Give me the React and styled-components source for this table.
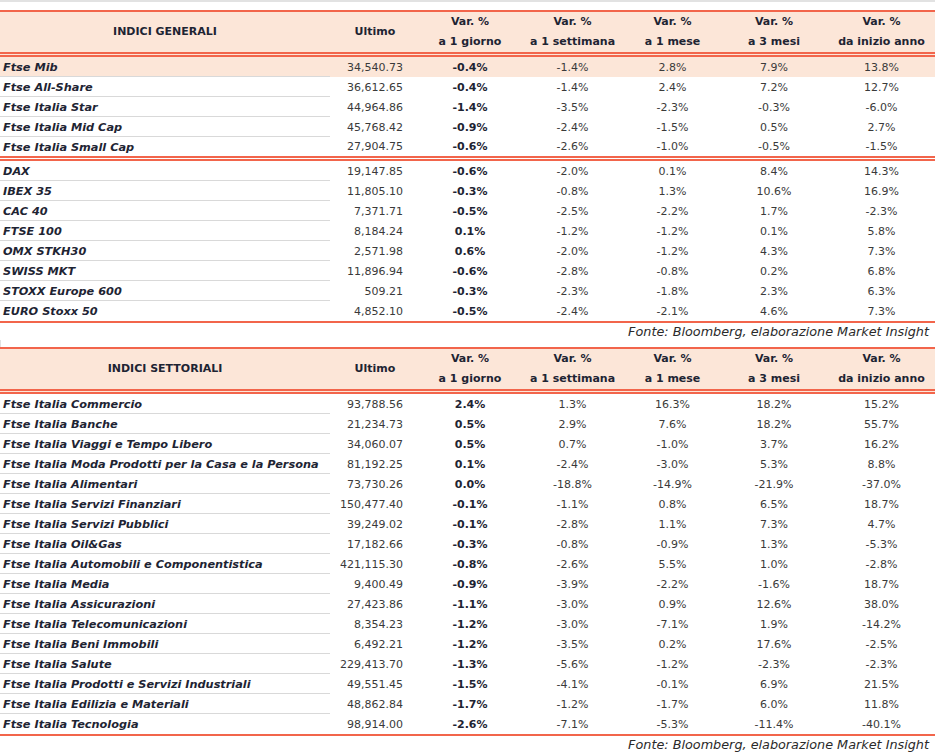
import React from 'react';
import styled, { createGlobalStyle } from 'styled-components';

const GlobalStyle = createGlobalStyle`
  body {
    margin: 0;
    background: #fff;
    font-family: "DejaVu Sans", "Liberation Sans", sans-serif;
    color: #1e2433;
  }
`;

const ORANGE = '#f2654b';
const PEACH = '#fce6d8';

const Page = styled.div`
  width: 935px;
  border-top: 2px solid #e2e2e2;
  padding-top: 8px;
`;

const Table = styled.table`
  width: 935px;
  table-layout: fixed;
  border-collapse: separate;
  border-spacing: 0;
  border-top: 2px solid ${ORANGE};
  border-bottom: 2px solid ${ORANGE};
`;

const HeadRow = styled.tr`
  height: 45px;
`;

const HeadCell = styled.th`
  background: ${PEACH};
  padding: 0;
  font-size: 11px;
  font-weight: 700;
  line-height: 20px;
  text-align: center;
  color: #1e2433;
  border-bottom: 5px double ${ORANGE};
  vertical-align: middle;
  white-space: nowrap;
`;

const Row = styled.tr`
  height: ${p => (p.$split ? '24px' : '20px')};
  background: ${p => (p.$highlight ? PEACH : 'transparent')};
`;

const NameCell = styled.td`
  padding: 1px 0 0 3px;
  font-size: 11.3px;
  font-weight: 700;
  font-style: italic;
  white-space: nowrap;
  overflow: hidden;
  color: #1e2433;
  border-bottom: ${p => (p.$split ? `5px double ${ORANGE}` : p.$last ? 'none' : '1px solid #d9d9d9')};
`;

const ValueCell = styled.td`
  padding: 0 ${p => (p.$right ? '17px' : '0')} 0 0;
  font-size: 11px;
  font-weight: ${p => (p.$bold ? 700 : 400)};
  text-align: ${p => (p.$right ? 'right' : 'center')};
  color: ${p => (p.$bold ? '#1e2433' : '#3a3a3a')};
  border-bottom: ${p => (p.$split ? `5px double ${ORANGE}` : 'none')};
`;

const Source = styled.div`
  width: 935px;
  box-sizing: border-box;
  padding-right: 6px;
  height: 17px;
  line-height: 17px;
  text-align: right;
  font-size: 12.8px;
  font-style: italic;
  color: #2a2a2a;
`;

const Gap = styled.div`
  height: 7px;
  border-left: 1px solid #e2e2e2;
`;

const widths = [330, 90, 100, 105, 95, 108, 107];

const generali = [
  ['Ftse Mib', '34,540.73', '-0.4%', '-1.4%', '2.8%', '7.9%', '13.8%'],
  ['Ftse All-Share', '36,612.65', '-0.4%', '-1.4%', '2.4%', '7.2%', '12.7%'],
  ['Ftse Italia Star', '44,964.86', '-1.4%', '-3.5%', '-2.3%', '-0.3%', '-6.0%'],
  ['Ftse Italia Mid Cap', '45,768.42', '-0.9%', '-2.4%', '-1.5%', '0.5%', '2.7%'],
  ['Ftse Italia Small Cap', '27,904.75', '-0.6%', '-2.6%', '-1.0%', '-0.5%', '-1.5%'],
  ['DAX', '19,147.85', '-0.6%', '-2.0%', '0.1%', '8.4%', '14.3%'],
  ['IBEX 35', '11,805.10', '-0.3%', '-0.8%', '1.3%', '10.6%', '16.9%'],
  ['CAC 40', '7,371.71', '-0.5%', '-2.5%', '-2.2%', '1.7%', '-2.3%'],
  ['FTSE 100', '8,184.24', '0.1%', '-1.2%', '-1.2%', '0.1%', '5.8%'],
  ['OMX STKH30', '2,571.98', '0.6%', '-2.0%', '-1.2%', '4.3%', '7.3%'],
  ['SWISS MKT', '11,896.94', '-0.6%', '-2.8%', '-0.8%', '0.2%', '6.8%'],
  ['STOXX Europe 600', '509.21', '-0.3%', '-2.3%', '-1.8%', '2.3%', '6.3%'],
  ['EURO Stoxx 50', '4,852.10', '-0.5%', '-2.4%', '-2.1%', '4.6%', '7.3%'],
];

const settoriali = [
  ['Ftse Italia Commercio', '93,788.56', '2.4%', '1.3%', '16.3%', '18.2%', '15.2%'],
  ['Ftse Italia Banche', '21,234.73', '0.5%', '2.9%', '7.6%', '18.2%', '55.7%'],
  ['Ftse Italia Viaggi e Tempo Libero', '34,060.07', '0.5%', '0.7%', '-1.0%', '3.7%', '16.2%'],
  ['Ftse Italia Moda Prodotti per la Casa e la Persona', '81,192.25', '0.1%', '-2.4%', '-3.0%', '5.3%', '8.8%'],
  ['Ftse Italia Alimentari', '73,730.26', '0.0%', '-18.8%', '-14.9%', '-21.9%', '-37.0%'],
  ['Ftse Italia Servizi Finanziari', '150,477.40', '-0.1%', '-1.1%', '0.8%', '6.5%', '18.7%'],
  ['Ftse Italia Servizi Pubblici', '39,249.02', '-0.1%', '-2.8%', '1.1%', '7.3%', '4.7%'],
  ['Ftse Italia Oil&Gas', '17,182.66', '-0.3%', '-0.8%', '-0.9%', '1.3%', '-5.3%'],
  ['Ftse Italia Automobili e Componentistica', '421,115.30', '-0.8%', '-2.6%', '5.5%', '1.0%', '-2.8%'],
  ['Ftse Italia Media', '9,400.49', '-0.9%', '-3.9%', '-2.2%', '-1.6%', '18.7%'],
  ['Ftse Italia Assicurazioni', '27,423.86', '-1.1%', '-3.0%', '0.9%', '12.6%', '38.0%'],
  ['Ftse Italia Telecomunicazioni', '8,354.23', '-1.2%', '-3.0%', '-7.1%', '1.9%', '-14.2%'],
  ['Ftse Italia Beni Immobili', '6,492.21', '-1.2%', '-3.5%', '0.2%', '17.6%', '-2.5%'],
  ['Ftse Italia Salute', '229,413.70', '-1.3%', '-5.6%', '-1.2%', '-2.3%', '-2.3%'],
  ['Ftse Italia Prodotti e Servizi Industriali', '49,551.45', '-1.5%', '-4.1%', '-0.1%', '6.9%', '21.5%'],
  ['Ftse Italia Edilizia e Materiali', '48,862.84', '-1.7%', '-1.2%', '-1.7%', '6.0%', '11.8%'],
  ['Ftse Italia Tecnologia', '98,914.00', '-2.6%', '-7.1%', '-5.3%', '-11.4%', '-40.1%'],
];

const periods = ['a 1 giorno', 'a 1 settimana', 'a 1 mese', 'a 3 mesi', 'da inizio anno'];

function IndexTable({ title, rows, highlight, split }) {
  return (
    <Table>
      <colgroup>
        {widths.map((w, i) => <col key={i} style={{ width: w }} />)}
      </colgroup>
      <thead>
        <HeadRow>
          <HeadCell>{title}</HeadCell>
          <HeadCell>Ultimo</HeadCell>
          {periods.map(p => (
            <HeadCell key={p}>Var. %<br />{p}</HeadCell>
          ))}
        </HeadRow>
      </thead>
      <tbody>
        {rows.map((r, i) => {
          const isSplit = i === split;
          const isLast = i === rows.length - 1;
          return (
            <Row key={r[0]} $highlight={i === highlight} $split={isSplit}>
              <NameCell $split={isSplit} $last={isLast}>{r[0]}</NameCell>
              <ValueCell $right $split={isSplit}>{r[1]}</ValueCell>
              {r.slice(2).map((v, j) => (
                <ValueCell key={j} $bold={j === 0} $split={isSplit}>{v}</ValueCell>
              ))}
            </Row>
          );
        })}
      </tbody>
    </Table>
  );
}

export default function App() {
  return (
    <Page>
      <GlobalStyle />
      <IndexTable title="INDICI GENERALI" rows={generali} highlight={0} split={4} />
      <Source>Fonte: Bloomberg, elaborazione Market Insight</Source>
      <Gap />
      <IndexTable title="INDICI SETTORIALI" rows={settoriali} split={-1} />
      <Source>Fonte: Bloomberg, elaborazione Market Insight</Source>
    </Page>
  );
}
